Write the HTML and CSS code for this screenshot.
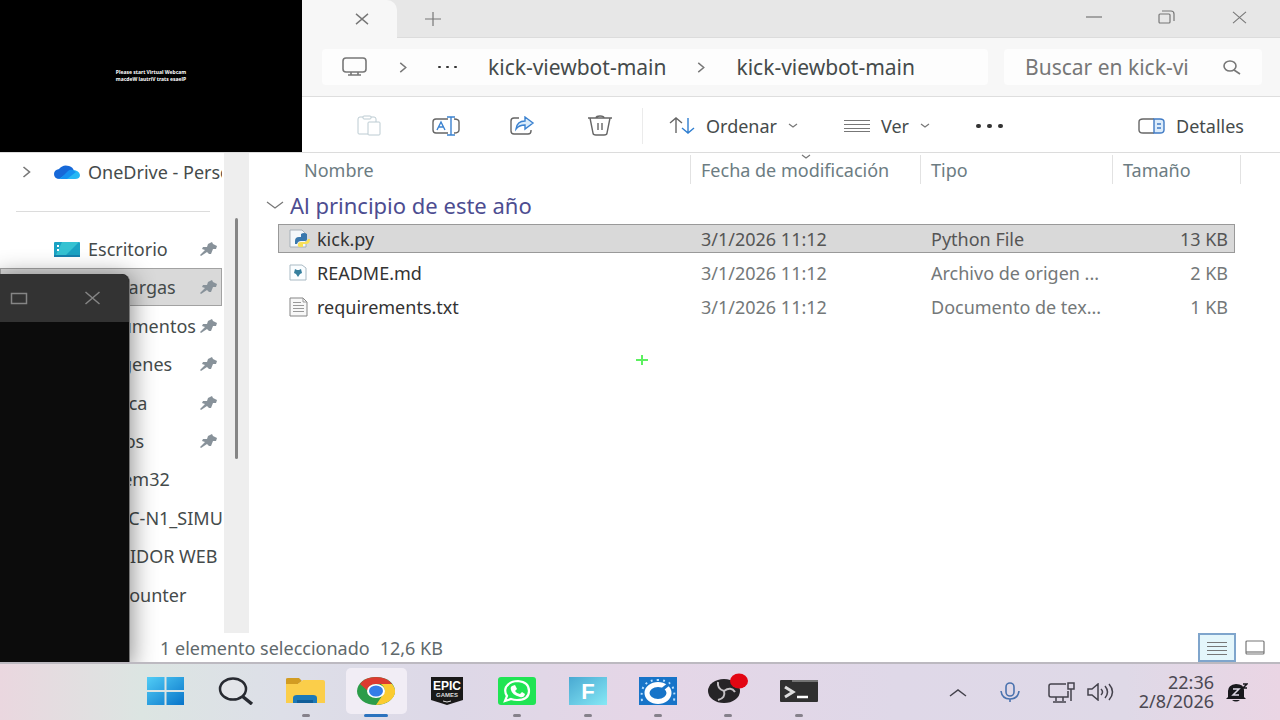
FILE: index.html
```html
<!DOCTYPE html>
<html lang="es">
<head>
    <meta charset="UTF-8">
    <meta name="viewport" content="width=device-width, initial-scale=1.0">
    <title>kick-viewbot-main</title>
    <link rel="stylesheet" href="styles.css">
</head>
<body>
    <svg class="defs" aria-hidden="true">
        <symbol id="pin" viewBox="0 0 18 14"><path d="M8 2l4-2 1 2 4 2-1 3-3 0-2 5-2 0-2-2-6 4-1-1 5-5-3-1 1-2 4 0z"/></symbol>
        <symbol id="close" viewBox="0 0 16 14"><path d="M1 1l14 12M15 1L1 13"/></symbol>
        <symbol id="chevron" viewBox="0 0 8 12"><path d="M1 1l6 5-6 5"/></symbol>
        <symbol id="down" viewBox="0 0 10 6"><path d="M1 1l4 3 4-3"/></symbol>
    </svg>

    <main class="explorer">
        <!-- Pestañas -->
        <div class="titlebar">
            <div class="tab">
                <button class="icon-btn" aria-label="Cerrar pestaña"><svg class="line thick" width="14" height="12"><use href="#close"/></svg></button>
            </div>
            <button class="icon-btn new-tab" aria-label="Nueva pestaña"><svg class="line" width="16" height="14" viewBox="0 0 16 14"><path d="M0 7h16M8 0v14"/></svg></button>
            <div class="window-controls">
                <button class="icon-btn" aria-label="Minimizar"><svg class="line" width="16" height="14" viewBox="0 0 16 14"><path d="M0 7h16"/></svg></button>
                <button class="icon-btn" aria-label="Restaurar"><svg class="line" width="17" height="14" viewBox="0 0 17 14"><rect x="1" y="4" width="11" height="9" rx="1"/><path d="M4 1h9q3 0 3 3v7"/></svg></button>
                <button class="icon-btn" aria-label="Cerrar"><svg class="line" width="17" height="13" viewBox="0 0 16 14"><use href="#close"/></svg></button>
            </div>
        </div>

        <!-- Barra de direcciones -->
        <div class="address-row">
            <nav class="address" aria-label="Ruta">
                <svg class="line thick pc" width="26" height="20" viewBox="0 0 26 20"><rect x="1" y="1" width="23" height="14" rx="3"/><path d="M9 15v3M16 15v3M6 18h13"/></svg>
                <svg class="line thick" width="8" height="11"><use href="#chevron"/></svg>
                <button class="dots small" aria-label="Más carpetas"><i></i><i></i><i></i></button>
                <a href="#">kick-viewbot-main</a>
                <svg class="line thick" width="8" height="11"><use href="#chevron"/></svg>
                <a href="#">kick-viewbot-main</a>
            </nav>
            <div class="search">
                <input type="text" aria-label="Buscar" placeholder="Buscar en kick-vi">
                <svg class="line thick" width="18" height="15" viewBox="0 0 18 15"><ellipse cx="7" cy="6" rx="6" ry="5"/><path d="M11 10l6 4"/></svg>
            </div>
        </div>

        <!-- Comandos -->
        <div class="toolbar">
            <div class="tools">
                <button class="icon-btn" aria-label="Pegar" disabled><svg width="24" height="21" viewBox="0 0 24 21" fill="none" stroke="#bccbd2"><path d="M11 19H2q-1 0-1-1V4q0-2 2-2h3M14 2h3q2 0 2 2v3"/><rect x="6" y="1" width="8" height="3" rx="1"/><rect x="11" y="7" width="12" height="13" rx="1"/></svg></button>
                <button class="icon-btn" aria-label="Cambiar nombre"><svg width="28" height="20" viewBox="0 0 28 20" fill="none" stroke="#666" stroke-width="1.4"><path d="M16 3H4Q1 3 1 6v8q0 3 3 3h12M22 3q5 0 5 3v8q0 3-5 3"/><path stroke="#3b82d0" d="M5 14l4-8 4 8M6 11h6M15 1h8M19 1v18M15 19h8"/></svg></button>
                <button class="icon-btn" aria-label="Compartir"><svg width="25" height="19" viewBox="0 0 25 19" fill="none" stroke="#666" stroke-width="1.4"><path d="M9 2H4Q1 2 1 5v10q0 3 3 3h14q3 0 3-3v-1"/><path fill="#d9ebfb" stroke="#3b82d0" d="M15 1l8 6-8 6V9q-6 0-9 4 1-8 9-8z"/></svg></button>
                <button class="icon-btn" aria-label="Eliminar"><svg width="24" height="21" viewBox="0 0 24 21" fill="none" stroke="#666" stroke-width="1.4"><path d="M0 3h24M8 3q0-2 4-2t4 2M2 3l3 15q0 2 3 2h8q3 0 3-2l3-15M10 8v7M14 8v7"/></svg></button>
            </div>
            <div class="menus">
                <button class="menu-btn"><svg width="26" height="17" viewBox="0 0 26 17" fill="none" stroke-width="1.4"><path stroke="#666" d="M7 16V1M1 6l6-5 6 5"/><path stroke="#2f7ed0" d="M19 1v15M13 11l6 5 6-5"/></svg><span>Ordenar</span><svg class="line" width="10" height="6"><use href="#down"/></svg></button>
                <button class="menu-btn"><svg class="line" width="26" height="14" viewBox="0 0 26 14"><path d="M0 1.5h26M0 5.5h26M0 9.5h26M0 12.500h26"/></svg><span>Ver</span><svg class="line" width="10" height="6"><use href="#down"/></svg></button>
                <button class="dots" aria-label="Ver más"><i></i><i></i><i></i></button>
            </div>
            <button class="menu-btn details"><svg width="27" height="16" viewBox="0 0 27 16" fill="none" stroke="#666" stroke-width="1.4"><path d="M16 1H5Q1 1 1 4v8q0 3 4 3h11"/><path fill="#dcecfb" stroke="#3f7ac4" d="M16 1h6q4 0 4 3v8q0 3-4 3h-6zM19 6h4M19 10h4"/></svg><span>Detalles</span></button>
        </div>

        <div class="content">
            <aside class="sidebar">
                <a class="place" href="#"><svg class="line thick expand" width="9" height="12"><use href="#chevron"/></svg>
                    <svg width="26" height="15" viewBox="0 0 26 15"><path fill="#1668d8" d="M6 14Q0 14 0 9q0-4 5-5Q9-1 15 1q4 1 5 5l-9 8z"/><path fill="#25b8f4" d="M5 14L18 5q7 0 8 5 0 4-5 4z"/><path fill="#1591f0" d="M6 14l8-8q2-2 5-1l3 2-9 7z"/></svg>
                    <span>OneDrive - Personal</span></a>
                <hr>
                <ul class="places">
                    <li><a class="place" href="#"><svg class="folder" width="26" height="15" viewBox="0 0 26 15"><rect width="26" height="15" rx="1" fill="#1ba2c3"/><path fill="#35c2d2" d="M8 0h17L10 15H1z"/><path fill="#1680ae" d="M0 13h26v2H0z"/><path fill="#fff" d="M3 3h2v2H3zM3 7h2v2H3z"/></svg><span>Escritorio</span><svg class="pin" width="18" height="14"><use href="#pin"/></svg></a></li>
                    <li><a class="place active" href="#"><span>Descargas</span><svg class="pin" width="18" height="14"><use href="#pin"/></svg></a></li>
                    <li><a class="place" href="#"><span>Documentos</span><svg class="pin" width="18" height="14"><use href="#pin"/></svg></a></li>
                    <li><a class="place" href="#"><span>Imágenes</span><svg class="pin" width="18" height="14"><use href="#pin"/></svg></a></li>
                    <li><a class="place" href="#"><span>Música</span><svg class="pin" width="18" height="14"><use href="#pin"/></svg></a></li>
                    <li><a class="place" href="#"><span>Vídeos</span><svg class="pin" width="18" height="14"><use href="#pin"/></svg></a></li>
                    <li><a class="place" href="#"><span>System32</span></a></li>
                    <li><a class="place" href="#"><span>TAPLC-N1_SIMUL</span></a></li>
                    <li><a class="place" href="#"><span>SERVIDOR WEB</span></a></li>
                    <li><a class="place" href="#"><span>kickcounter</span></a></li>
                </ul>
            </aside>
            <div class="scrollbar"><div class="thumb"></div></div>

            <section class="files">
                <table>
                    <thead>
                        <tr>
                            <th class="name">Nombre</th>
                            <th class="date">Fecha de modificación<svg class="line sort" width="10" height="6"><use href="#down"/></svg></th>
                            <th class="type">Tipo</th>
                            <th class="size">Tamaño</th>
                        </tr>
                    </thead>
                    <tbody>
                        <tr class="group">
                            <th colspan="4"><div><svg class="line" width="18" height="9" viewBox="0 0 18 9"><path d="M1 1l8 6 8-6"/></svg>Al principio de este año</div></th>
                        </tr>
                        <tr class="selected">
                            <td><div class="file"><svg width="21" height="19" viewBox="0 0 21 19"><path fill="#f4f7fa" stroke="#a7b0b8" d="M1 1h12l4 4v13H1z"/><path fill="#3a78ad" d="M6 12q0-4 4-4h2V5q3-2 6 0v5q0 2-3 2h-3q-3 0-4 3H6z"/><path fill="#f7df58" d="M21 10q0 5-4 5h-3v3h-4q-2-1-1-3 0-2 3-2h4q2 0 3-3z"/></svg>kick.py</div></td>
                            <td>3/1/2026 11:12</td>
                            <td>Python File</td>
                            <td class="num">13 KB</td>
                        </tr>
                        <tr>
                            <td><div class="file"><svg width="21" height="17" viewBox="0 0 21 17"><path fill="#fafdff" stroke="#a9bac4" d="M1 1h12l4 3v12H1z"/><path fill="#357f9e" d="M6 5l2 1h2l2-1 1 4-2 1-2 3-2-3-2-1z"/></svg>README.md</div></td>
                            <td>3/1/2026 11:12</td>
                            <td>Archivo de origen ...</td>
                            <td class="num">2 KB</td>
                        </tr>
                        <tr>
                            <td><div class="file"><svg width="21" height="20" viewBox="0 0 21 20"><path fill="#f8f8f8" stroke="#858585" d="M1 1h13l4 4v14H1z"/><path fill="none" stroke="#999" d="M4 5.500h8M4 8.500h11M4 11.500h11M4 14.500h11M14 1v4h4"/></svg>requirements.txt</div></td>
                            <td>3/1/2026 11:12</td>
                            <td>Documento de tex...</td>
                            <td class="num">1 KB</td>
                        </tr>
                    </tbody>
                </table>
            </section>
        </div>

        <footer class="status">
            <span>1 elemento seleccionado</span>
            <span>12,6 KB</span>
            <div class="views">
                <button class="view on" aria-label="Vista de detalles"><svg class="line" width="20" height="14" viewBox="0 0 20 14"><path d="M0 1.500h20M0 5.500h20M0 9.500h20M0 13.500h20"/></svg></button>
                <button class="view" aria-label="Iconos grandes"><svg class="line" width="20" height="15" viewBox="0 0 20 15"><rect x="1" y="1" width="18" height="13" rx="1"/><path d="M1 12h18"/></svg></button>
            </div>
        </footer>
    </main>

    <!-- Barra de tareas -->
    <div class="taskbar">
        <div class="apps">
            <button class="app" aria-label="Inicio"><svg width="37" height="28" viewBox="0 0 37 28"><defs><linearGradient id="win" x2="1" y2="1"><stop stop-color="#51cdf6"/><stop offset="1" stop-color="#0874c9"/></linearGradient></defs><path fill="url(#win)" d="M0 0h17.500v13H0zM19.500 0H37v13H19.500zM0 15h17.500v13H0zM19.500 15H37v13H19.500z"/></svg></button>
            <button class="app" aria-label="Buscar"><svg width="36" height="28" viewBox="0 0 36 28" fill="none" stroke="#272a31"><ellipse cx="15" cy="12" rx="13" ry="10.500" fill="#e3e5e9" stroke-width="2.500"/><path stroke-width="3.500" d="M24 19l10 8"/></svg></button>
            <button class="app running" aria-label="Explorador de archivos"><svg width="39" height="26" viewBox="0 0 39 26"><path fill="#d29c22" d="M0 1q0-1 2-1h11l3 3-4 3H0z"/><path fill="#fbce4a" d="M0 6h12l5-4h20q2 0 2 2v21H0z"/><path fill="#1c79b8" d="M7 25v-5q0-3 4-3h16q4 0 4 3v5z"/><path fill="#115e99" d="M11 22h16v3H11z"/></svg></button>
            <button class="app current" aria-label="Google Chrome"><svg width="38" height="28" viewBox="0 0 38 28"><ellipse cx="19" cy="14" rx="19" ry="14" fill="#2c9c49"/><path fill="#db3a30" d="M3 7Q8 0 19 0t16 7H19q-7 0-8 7z"/><path fill="#fbcb30" d="M35 7q4 5 3 9-3 11-19 12l8-12q2-5-3-9z"/><ellipse cx="19" cy="14" rx="9" ry="7" fill="#fff"/><ellipse cx="19" cy="14" rx="7" ry="5.500" fill="#337de8"/></svg></button>
            <button class="app" aria-label="Epic Games"><svg width="34" height="28" viewBox="0 0 34 28"><path fill="#191919" d="M1 0h32v23l-16 5-16-5z"/><text class="epic" x="17" y="13" text-anchor="middle">EPIC</text><text class="epic-sub" x="17" y="20" text-anchor="middle">GAMES</text><path stroke="#ddd" fill="none" d="M13 24l4 1 4-1"/></svg></button>
            <button class="app running" aria-label="WhatsApp"><svg width="38" height="28" viewBox="0 0 38 28"><rect width="38" height="28" rx="3" fill="#20e454"/><path fill="none" stroke="#fff" stroke-width="2.200" d="M7 24l2-5q-3-4-1-9 4-6 12-6 11 1 11 10 0 9-12 9-3 0-6-1z"/><path fill="#fff" d="M14 9l3-1 2 4-2 2q2 3 5 3l2-2 3 2q-1 4-5 3-8-2-9-7-1-3 1-4z"/></svg></button>
            <button class="app running" aria-label="Fortnite"><svg width="38" height="28" viewBox="0 0 38 28"><defs><linearGradient id="fn" x2="1" y2="1"><stop stop-color="#49a9d2"/><stop offset="1" stop-color="#86e8f5"/></linearGradient></defs><rect width="38" height="28" fill="url(#fn)"/><text class="fn" x="19" y="22" text-anchor="middle">F</text></svg></button>
            <button class="app running" aria-label="Temporizador"><svg width="38" height="28" viewBox="0 0 38 28"><rect width="38" height="28" fill="#1774c8"/><path fill="none" stroke="#b9e0ff" stroke-width="2" stroke-dasharray="2 4" d="M3 24Q0 3 19 3t16 21"/><ellipse cx="19" cy="16" rx="11" ry="8.500" fill="none" stroke="#fff" stroke-width="5"/><circle cx="19" cy="16" r="4" fill="#1774c8"/><path stroke="#1774c8" stroke-width="3" d="M20 15l10-8"/></svg></button>
            <button class="app running obs" aria-label="OBS Studio"><svg width="40" height="30" viewBox="0 0 40 30"><ellipse cx="16" cy="18" rx="16" ry="12" fill="#262427"/><path fill="none" stroke="#c4c0c4" stroke-width="2" d="M10 9q-1 7 6 9 7-5 11 1M16 18q2 7-6 9"/><ellipse cx="31" cy="8" rx="9" ry="7.500" fill="#e30613"/></svg></button>
            <button class="app running" aria-label="Terminal"><svg width="38" height="22" viewBox="0 0 38 22"><rect width="38" height="22" rx="1" fill="#303030"/><path fill="#737373" d="M12 0h26v2H12z"/><path fill="none" stroke="#ddd" stroke-width="3" d="M5 7l8 5-8 5"/><path stroke="#fff" stroke-width="2.500" d="M17 17h11"/></svg></button>
        </div>
        <div class="tray">
            <button class="icon-btn" aria-label="Iconos ocultos"><svg class="line dark" width="18" height="9" viewBox="0 0 18 9"><path d="M1 8l8-6 8 6"/></svg></button>
            <button class="icon-btn mic" aria-label="Micrófono"><svg width="20" height="20" viewBox="0 0 20 20" fill="none" stroke="#4a72ae" stroke-width="1.600"><rect x="6" y="1" width="8" height="13" rx="4"/><path d="M1 9q1 8 9 8t9-8M10 17v3"/></svg></button>
            <button class="icon-btn" aria-label="Red"><svg class="line dark" width="27" height="21" viewBox="0 0 27 21"><path d="M18 2H3Q1 2 1 4v9q0 2 2 2h17V9M8 15v4M15 15v4M5 20h13M20 1h6v6h-6zM23 7v12"/></svg></button>
            <button class="icon-btn" aria-label="Volumen"><svg class="line dark" width="27" height="18" viewBox="0 0 27 18"><path d="M1 6h4l6-5v16l-6-5H1zM14 6q3 3 0 6M18 3q5 6 0 12M22 1q7 8 0 16"/></svg></button>
            <div class="clock"><time>22:36</time><time>2/8/2026</time></div>
            <button class="icon-btn" aria-label="No molestar"><svg width="22" height="19" viewBox="0 0 22 19"><path fill="#18181c" d="M2 14V8q0-6 8-7 8 0 8 6v7l2 2H0zM6 17h8q-4 3-8 0z"/><path fill="none" stroke="#ddd8e5" stroke-width="1.500" d="M7 6h6l-6 6h6"/><path fill="none" stroke="#18181c" stroke-width="1.500" d="M17 1h4l-4 4h4"/></svg></button>
        </div>
    </div>

    <section class="terminal">
        <div class="terminal-bar">
            <button class="icon-btn" aria-label="Maximizar"><svg width="18" height="13" viewBox="0 0 18 13"><rect x="1.500" y="1.500" width="15" height="10"/></svg></button>
            <button class="icon-btn" aria-label="Cerrar terminal"><svg width="17" height="14"><use href="#close"/></svg></button>
        </div>
    </section>

    <section class="webcam">
        <p>Please start Virtual Webcam</p>
        <p>macdeW lautriV trats esaelP</p>
    </section>

    <svg class="cross" width="12" height="10" viewBox="0 0 12 10"><path d="M0 5h12M6 0v10"/></svg>
</body>
</html>
```
FILE: styles.css
```css
* {
    margin: 0;
    padding: 0;
    box-sizing: border-box;
}

body {
    font-family: 'Noto Sans', 'Open Sans', sans-serif;
    font-size: 18px;
    line-height: 24px;
    color: #454b4b;
    background: #fff;
    height: 100vh;
    display: flex;
    flex-direction: column;
    position: relative;
    overflow: hidden;
}

button {
    font: inherit;
    color: inherit;
    background: none;
    border: none;
}

a {
    color: inherit;
    text-decoration: none;
}

svg {
    display: block;
    flex: none;
}

.defs {
    width: 0;
    height: 0;
    position: absolute;
}

.line {
    fill: none;
    stroke: #777;
    stroke-width: 1.2;
}

.line.thick {
    stroke-width: 1.6;
}

.line.dark {
    stroke: #44424c;
    stroke-width: 1.5;
}

.icon-btn {
    display: flex;
    align-items: center;
    justify-content: center;
}

.explorer {
    flex: 1;
    min-height: 0;
    display: flex;
    flex-direction: column;
}

/* Pestañas */
.titlebar {
    height: 38px;
    background: #e7e7e7;
    border-bottom: 1px solid #dcdcdc;
    display: flex;
    padding-left: 302px;
}

.tab {
    width: 95px;
    height: 38px;
    background: #f7f7f7;
    border-top-right-radius: 10px;
    display: flex;
    align-items: center;
    justify-content: flex-end;
    padding-right: 28px;
}

.new-tab {
    width: 72px;
}

.window-controls {
    margin-left: auto;
    height: 34px;
    display: flex;
    padding-right: 4px;
}

.window-controls .icon-btn {
    width: 73px;
}

/* Barra de direcciones */
.address-row {
    height: 59px;
    background: #f7f7f7;
    border-bottom: 1px solid #dedede;
    display: flex;
    align-items: center;
    gap: 16px;
    padding: 0 18px 0 322px;
    font-size: 21px;
}

.address {
    flex: 1;
    height: 36px;
    background: #fdfdfd;
    border-radius: 4px;
    display: flex;
    align-items: center;
    padding-left: 20px;
    gap: 31px;
    white-space: nowrap;
}

.search {
    width: 258px;
    height: 36px;
    background: #fdfdfd;
    border-radius: 4px;
    display: flex;
    align-items: center;
    padding: 0 21px;
    gap: 14px;
}

.search input {
    flex: 1;
    min-width: 0;
    border: none;
    outline: none;
    background: none;
    font: inherit;
}

.search input::placeholder {
    color: #777;
}

.dots {
    display: flex;
    gap: 6px;
    align-items: center;
}

.dots i {
    width: 5px;
    height: 4px;
    border-radius: 2px;
    background: #333;
}

.dots.small {
    gap: 5px;
}

.dots.small i {
    width: 3px;
    height: 2px;
}

/* Comandos */
.toolbar {
    height: 56px;
    border-bottom: 1px solid #dcdcdc;
    display: flex;
    align-items: center;
    padding: 2px 36px 0 330px;
}

.tools {
    display: flex;
    height: 36px;
    padding-right: 4px;
    border-right: 1px solid #ebebeb;
}

.tools .icon-btn {
    width: 77px;
}

.menus {
    display: flex;
    gap: 46px;
    padding-left: 26px;
}

.menu-btn {
    display: flex;
    align-items: center;
    gap: 11px;
}

.details {
    margin-left: auto;
}

/* Contenido */
.content {
    flex: 1;
    min-height: 0;
    display: flex;
}

.sidebar {
    width: 224px;
    display: flex;
    flex-direction: column;
    padding: 0 2px 19px 0;
}

.place {
    height: 38px;
    display: flex;
    align-items: center;
    padding-left: 88px;
    padding-right: 4px;
    white-space: nowrap;
    overflow: hidden;
}

.sidebar > .place {
    padding-left: 22px;
    padding-right: 0;
    gap: 8px;
}

.expand {
    margin-right: 15px;
}

.sidebar hr {
    border: none;
    border-top: 1px solid #dcdcdc;
    margin: 20px 12px 18px 16px;
}

.places {
    list-style: none;
    flex: 1;
    display: flex;
    flex-direction: column;
}

.places li {
    flex: 1;
}

.place .folder {
    margin-left: -34px;
    margin-right: 8px;
}

.place.active {
    background: #d9d9d9;
    border: 1px solid #a2a2a2;
    padding-left: 87px;
    padding-right: 3px;
}

.pin {
    fill: #88929a;
    margin-left: auto;
}

.scrollbar {
    width: 25px;
    background: #eee;
    padding: 65px 0 0 11px;
}

.thumb {
    width: 3px;
    height: 58%;
    border-radius: 2px;
    background: #858585;
}

.files {
    flex: 1;
    padding: 0 45px 0 29px;
}

/* Lista de archivos */
table {
    width: 100%;
    margin-top: -3px;
    table-layout: fixed;
    border-collapse: separate;
    border-spacing: 0 5px;
    white-space: nowrap;
}

th {
    font-weight: normal;
    text-align: left;
    color: #6c7c82;
}

thead th {
    height: 29px;
    padding-left: 10px;
    border-left: 1px solid #e2e2e2;
    position: relative;
}

thead .name {
    border-left: none;
    padding-left: 26px;
}

.date {
    width: 230px;
}

.type {
    width: 192px;
}

.size {
    width: 123px;
}

.size::after {
    content: '';
    position: absolute;
    top: 0;
    right: -6px;
    height: 100%;
    border-right: 1px solid #e2e2e2;
}

.sort {
    position: absolute;
    top: -1px;
    left: 48%;
}

.group th {
    height: 30px;
    font-size: 22px;
    padding-top: 2px;
    color: #4d4d91;
}

.group div {
    display: flex;
    align-items: center;
    gap: 6px;
    margin-left: -12px;
}

td {
    height: 29px;
    padding-left: 11px;
    color: #747879;
}

.file {
    display: flex;
    align-items: center;
    gap: 7px;
    color: #333;
}

.num {
    text-align: right;
    padding-right: 7px;
}

.selected {
    outline: 1px solid #999;
    outline-offset: -1px;
}

.selected td {
    background: #d9d9d9;
    color: #555;
}

/* Barra de estado */
.status {
    height: 29px;
    display: flex;
    align-items: center;
    gap: 10px;
    padding: 0 6px 0 160px;
    color: #5f696c;
}

.views {
    margin-left: auto;
    display: flex;
}

.view {
    width: 38px;
    height: 29px;
    display: flex;
    align-items: center;
    justify-content: center;
}

.view.on {
    background: #e4f6fb;
    border: 2px solid #7fa5cc;
}

/* Barra de tareas */
.taskbar {
    height: 58px;
    border-top: 2px solid #bcb9c0;
    background: linear-gradient(90deg, #ead7df 0%, #dce5e2 11%, #dddfe8 22%, #ddd8e7 35%, #e5d6e7 50%, #dfd8e8 70%, #dfd9e7 88%, #ead5e4 100%);
    display: flex;
    justify-content: space-between;
    padding-left: 130px;
}

.apps {
    width: 55vw;
    display: grid;
    grid-template-columns: repeat(10, 1fr);
}

.app {
    position: relative;
    height: 46px;
    margin: 4px 5px;
    border-radius: 5px;
    display: flex;
    align-items: center;
    justify-content: center;
}

.running::after,
.current::after {
    content: '';
    position: absolute;
    bottom: -3px;
    left: 50%;
    width: 8px;
    height: 3px;
    margin-left: -4px;
    border-radius: 2px;
    background: #85818b;
}

.current {
    background: #f1edf5;
}

.current::after {
    width: 24px;
    margin-left: -12px;
    background: #2b72be;
}

.obs {
    padding-bottom: 6px;
}

.epic {
    font: bold 12px 'Liberation Sans', sans-serif;
    fill: #fff;
}

.epic-sub {
    font: bold 6px 'Liberation Sans', sans-serif;
    fill: #ddd;
}

.fn {
    font: bold 22px 'Liberation Sans', sans-serif;
    fill: #fff;
}

.tray {
    display: flex;
    align-items: center;
    gap: 12px;
    padding-right: 32px;
}

.mic {
    margin: 0 16px 0 21px;
}

.clock {
    display: flex;
    flex-direction: column;
    align-items: flex-end;
    margin-left: 13px;
    line-height: 19px;
    color: #4b4852;
}

/* Ventanas superpuestas */
.terminal {
    position: absolute;
    left: 0;
    top: 274px;
    bottom: 58px;
    width: 130px;
    background: #0c0c0c;
    border-right: 1px solid #777;
    border-top-right-radius: 8px;
    box-shadow: 0 4px 24px 2px rgba(0, 0, 0, 0.45);
    clip-path: inset(-30px -40px 0 0);
}

.terminal-bar {
    height: 48px;
    background: #333;
    border-top-right-radius: 8px;
    display: flex;
    align-items: center;
    gap: 56px;
    padding-left: 10px;
}

.terminal-bar svg {
    fill: none;
    stroke: #858585;
    stroke-width: 1.5;
}

.webcam {
    position: absolute;
    left: 0;
    top: 0;
    width: 302px;
    height: 152px;
    background: #000;
    color: #fff;
    font-size: 5px;
    font-weight: bold;
    line-height: 7px;
    text-align: center;
    display: flex;
    flex-direction: column;
    justify-content: center;
}

.cross {
    position: absolute;
    left: 636px;
    top: 355px;
    fill: none;
    stroke: #5cf060;
    stroke-width: 2;
}
```
